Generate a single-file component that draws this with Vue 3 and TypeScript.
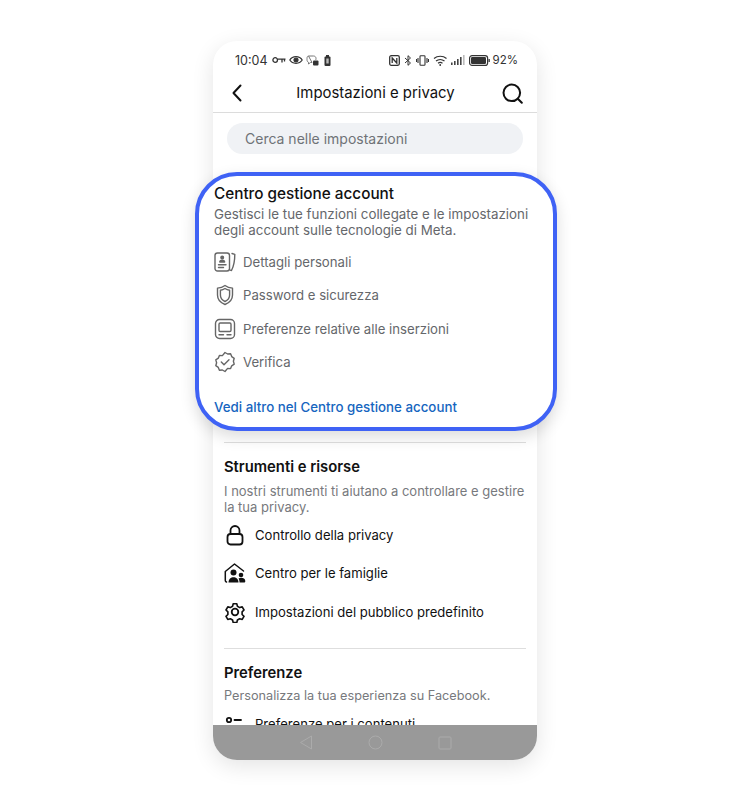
<script setup lang="ts">
const tools = [
  { id: 'lock', label: 'Controllo della privacy' },
  { id: 'family', label: 'Centro per le famiglie' },
  { id: 'gear', label: 'Impostazioni del pubblico predefinito' },
]
const accountLinks = [
  { id: 'card', label: 'Dettagli personali' },
  { id: 'shield', label: 'Password e sicurezza' },
  { id: 'ads', label: 'Preferenze relative alle inserzioni' },
  { id: 'badge', label: 'Verifica' },
]
</script>

<template>
  <div class="page">
    <div class="phone">
      <div class="status">
        <div class="status-left">
          <span class="time">10:04</span>
          <svg width="14" height="8" viewBox="0 0 14 8" fill="none" stroke="#333" stroke-width="1.3"><circle cx="3.2" cy="4" r="2.3" /><path d="M5.5 3.2H13.500M10 3.2V6.500M12.500 3.2V5.500" /></svg>
          <svg width="14" height="10" viewBox="0 0 14 10" fill="none" stroke="#333" stroke-width="1.2"><path d="M.8 5C3.5.6 10.500.6 13.200 5 10.500 9.400 3.5 9.400.8 5Z" /><circle cx="7" cy="5" r="2" fill="#333" /></svg>
          <svg width="13" height="11" viewBox="0 0 13 11" fill="none" stroke="#777" stroke-width="1"><path d="M2.500 1h5c1.500 0 2.500 1 2.500 2.500 0 .5 0 1-.3 1.500M6 7.500H4.500L2.500 9V7.300C1.500 7 1 6 1 4.500v-1C1 2 1.500 1 2.500 1Z" /><rect x="7" y="5.500" width="5.500" height="5" rx="1" fill="#333" stroke="none" /></svg>
          <svg class="left-batt" width="7" height="11" viewBox="0 0 7 11"><rect x="2" y="0" width="3" height="2" fill="#333" /><rect x=".5" y="1.500" width="6" height="9.500" rx="1" fill="#333" /><rect x="2.300" y="3.500" width="2.400" height="5" fill="#bbb" /></svg>
        </div>
        <div class="status-right">
          <svg width="11" height="11" viewBox="0 0 11 11" fill="none" stroke="#333" stroke-width="1.3"><rect x=".7" y=".7" width="9.600" height="9.600" rx="1.500" /><path d="M3.200 8V3L7.800 8V3" /></svg>
          <svg width="8" height="11" viewBox="0 0 8 11" fill="none" stroke="#333" stroke-width="1"><path d="M1 3l5.500 5L4 10.300V.7L6.500 3 1 8" /></svg>
          <svg width="13" height="11" viewBox="0 0 13 11" fill="none" stroke="#333" stroke-width="1.100"><rect x="4" y=".8" width="5" height="9.400" rx=".8" /><path d="M2 3v5M.5 4v3M11 3v5M12.500 4v3" /></svg>
          <svg width="15" height="11" viewBox="0 0 15 11" fill="none" stroke="#333" stroke-width="1.200"><path d="M1 3.500c3.500-3 9-3 12.500 0M3 6c2.400-2 6-2 8.500 0M5 8.300c1.300-1 3.200-1 4.500 0" /><circle cx="7.200" cy="10" r=".9" fill="#333" stroke="none" /></svg>
          <svg width="14" height="10" viewBox="0 0 14 10" fill="#444"><rect x="0" y="7.500" width="1.600" height="2.500" /><rect x="3" y="6" width="1.600" height="4" /><rect x="6" y="4" width="1.600" height="6" /><rect x="9" y="2" width="1.600" height="8" /><rect x="12" y="0" width="1.600" height="10" fill="#bbb" /></svg>
          <svg width="21" height="11" viewBox="0 0 21 11"><rect x=".6" y=".6" width="18" height="9.800" rx="2.500" fill="none" stroke="#333" stroke-width="1.200" /><rect x="2" y="2" width="15" height="7" rx="1.200" fill="#333" /><rect x="19.500" y="4" width="1.300" height="3" fill="#333" /></svg>
          <span class="percent">92%</span>
        </div>
      </div>

      <div class="nav-bar">
        <svg width="12" height="18" viewBox="0 0 12 18" fill="none" stroke="#111" stroke-width="2" stroke-linecap="round" stroke-linejoin="round"><path d="M9.500 1.500 2.500 9l7 7.500" /></svg>
        <span class="nav-title">Impostazioni e privacy</span>
        <svg width="21" height="21" viewBox="0 0 21 21" fill="none" stroke="#111" stroke-width="2" stroke-linecap="round"><circle cx="9.800" cy="9.800" r="8.300" /><path d="m15.800 15.800 4 4" /></svg>
      </div>

      <div class="scroll">
        <div class="search">Cerca nelle impostazioni</div>

        <section class="account-card">
          <h2>Centro gestione account</h2>
          <p class="desc">Gestisci le tue funzioni collegate e le impostazioni degli account sulle tecnologie di Meta.</p>
          <ul class="account-list">
            <li v-for="item in accountLinks" :key="item.id">
              <svg width="22" height="22" viewBox="0 0 22 22" fill="none" stroke="#666" stroke-width="1.400" stroke-linecap="round" stroke-linejoin="round">
                <template v-if="item.id === 'card'">
                  <rect x="1" y="2" width="14.500" height="18" rx="2.500" />
                  <circle cx="8.200" cy="6.500" r="1.300" fill="#666" />
                  <path d="M5.800 11c0-2.400 4.800-2.400 4.800 0Z" fill="#666" />
                  <path d="M4.500 13.800h7.500M4.500 16.500h5" />
                  <path d="M18 2.500l2.800.8c0 5.500-.8 11.500-3.300 16.200l-1.200-.4" />
                </template>
                <template v-else-if="item.id === 'shield'">
                  <path d="M11 1.500c2.300 1.700 4.700 2.400 7.500 2.600v7c0 4.500-3.200 7.800-7.500 9.400-4.300-1.600-7.500-4.900-7.500-9.400v-7C6.300 3.900 8.700 3.200 11 1.500Z" />
                  <path d="M11 4.500c1.500 1 3 1.500 4.600 1.700v4.900c0 3-2 5.300-4.600 6.400-2.600-1.100-4.600-3.400-4.600-6.400V6.200C8 6 9.500 5.500 11 4.500Z" />
                </template>
                <template v-else-if="item.id === 'ads'">
                  <rect x="1.500" y="1.500" width="19" height="19" rx="4" />
                  <rect x="5" y="5" width="12" height="8.500" rx="1.200" />
                  <path d="M5 16.700h4.500M13 16.700h4" />
                </template>
                <template v-else>
                  <path d="M11 1.500l2.600 1.500 3-.2 1.100 2.800 2.500 1.700-.8 2.900.8 2.900-2.500 1.700-1.100 2.800-3-.2L11 20.500 8.400 19l-3 .2-1.100-2.800-2.500-1.700.8-2.900-.8-2.900 2.500-1.700 1.100-2.800 3 .2Z" />
                  <path d="m7.300 11 2.700 2.700 5-5" />
                </template>
              </svg>
              <span>{{ item.label }}</span>
            </li>
          </ul>
          <a class="more">Vedi altro nel Centro gestione account</a>
        </section>

        <section class="group first">
          <h3>Strumenti e risorse</h3>
          <p class="desc light">I nostri strumenti ti aiutano a controllare e gestire la tua privacy.</p>
          <ul class="tool-list">
            <li v-for="tool in tools" :key="tool.id">
              <svg width="22" height="22" viewBox="0 0 22 22" fill="none" stroke="#111" stroke-width="1.800" stroke-linecap="round" stroke-linejoin="round">
                <template v-if="tool.id === 'lock'">
                  <rect x="3.500" y="10" width="15" height="10.500" rx="3" />
                  <path d="M6.500 10V6.500a4.500 4.500 0 0 1 9 0V10" />
                </template>
                <template v-else-if="tool.id === 'family'">
                  <path d="M2.500 20c-.8-.2-1.200-.7-1.200-1.500V9.500L10.500 2l9 7" stroke-width="1.500" />
                  <circle cx="9.500" cy="10.500" r="3" fill="#111" stroke="none" />
                  <path d="M4.500 20.500c0-7 10-7 10 0Z" fill="#111" stroke="none" />
                  <circle cx="17" cy="13" r="2.300" fill="#111" stroke="none" />
                  <path d="M15.500 20.500c0-1.500-.2-2.800-1-4 2.500-1.500 6.800-.5 6.800 2.500 0 1-.5 1.500-1.300 1.500Z" fill="#111" stroke="none" />
                </template>
                <template v-else>
                  <path d="M9 1.800h4l.7 2.900 2.500 1.400 2.800-.8 2 3.500-2.100 2.100v2.900l2.100 2-2 3.500-2.800-.8-2.500 1.400-.7 2.900H9l-.7-2.900-2.500-1.400-2.800.8-2-3.500 2.100-2v-2.900L1 8.800l2-3.500 2.800.8 2.500-1.400Z" transform="translate(1.100 1.100) scale(.9)" />
                  <circle cx="11" cy="11" r="3.300" />
                </template>
              </svg>
              <span>{{ tool.label }}</span>
            </li>
          </ul>
        </section>

        <section class="group">
          <h3>Preferenze</h3>
          <p class="desc light narrow">Personalizza la tua esperienza su Facebook.</p>
          <ul class="tool-list">
            <li>
              <svg width="22" height="22" viewBox="0 0 22 22" fill="none" stroke="#111" stroke-width="1.800" stroke-linecap="round"><circle cx="5" cy="7" r="2.200" /><path d="M10.500 7H17" /></svg>
              <span>Preferenze per i contenuti</span>
            </li>
          </ul>
        </section>
      </div>

      <div class="softkeys">
        <svg width="14" height="15" viewBox="0 0 14 15" fill="none" stroke="#ababab" stroke-width="1"><path d="M12.500 1 1.500 7.500l11 6.500Z" /></svg>
        <svg width="15" height="15" viewBox="0 0 15 15" fill="none" stroke="#ababab" stroke-width="1"><circle cx="7.500" cy="7.500" r="6.500" /></svg>
        <svg width="14" height="14" viewBox="0 0 14 14" fill="none" stroke="#ababab" stroke-width="1"><rect x="1" y="1" width="12" height="12" rx="1" /></svg>
      </div>
    </div>
  </div>
</template>

<style scoped>
.page {
  width: 750px;
  height: 800px;
  box-sizing: border-box;
  padding: 41px 213px 40px;
  background: #fff;
  font-family: "Inter", "Liberation Sans", sans-serif;
  color: #111;
}

.phone {
  height: 719px;
  border-radius: 24px;
  background: #fff;
  box-shadow: 0 6px 22px rgba(0, 0, 0, 0.11);
  display: flex;
  flex-direction: column;
}

.status {
  height: 36px;
  flex: none;
  padding: 2px 19px 0 22px;
  box-sizing: border-box;
  display: flex;
  align-items: center;
  justify-content: space-between;
}

.status-left,
.status-right {
  display: flex;
  align-items: center;
  gap: 3px;
}

.status-right {
  gap: 3.700px;
}

.left-batt {
  margin-left: 2px;
}

.time {
  font-size: 12.500px;
  color: #333;
  margin-right: 1px;
}

.percent {
  font-size: 11.500px;
  color: #333;
  margin-left: -1px;
}

.nav-bar {
  height: 36px;
  flex: none;
  padding: 0 14px 3px 18px;
  box-sizing: border-box;
  border-bottom: 1px solid #dcdcdc;
  display: flex;
  align-items: center;
  justify-content: space-between;
}

.nav-title {
  margin-left: 6px;
  font-size: 14.900px;
  color: #111;
}

/* only the bottom is clipped, the card sticks out at the sides */
.scroll {
  flex: 1;
  min-height: 0;
  clip-path: inset(0 -40px 0 -40px);
  display: flex;
  flex-direction: column;
}

.search {
  flex: none;
  height: 31px;
  margin: 10px 14px 0;
  padding-left: 18px;
  border-radius: 16px;
  background: #f0f2f5;
  color: #6f7277;
  font-size: 14px;
  line-height: 31px;
}

.account-card {
  flex: none;
  position: relative;
  z-index: 1;
  height: 259px;
  box-sizing: border-box;
  margin: 18px -20px 0 -18px;
  padding: 8px 15px 0;
  border: 4px solid #3f62f5;
  border-radius: 42px;
  background: #fff;
  box-shadow: 0 6px 16px rgba(0, 0, 0, 0.14);
  display: flex;
  flex-direction: column;
}

h2,
h3 {
  margin: 0;
  line-height: 20px;
}

h2 {
  font-size: 15.300px;
  font-weight: 500;
  color: #111;
}

h3 {
  font-size: 14.800px;
  font-weight: 600;
}

.desc {
  margin: 2px 0 0;
  font-size: 13.350px;
  line-height: 16px;
  color: #65676b;
}

.desc.light {
  font-size: 13px;
  line-height: 16.500px;
  color: #77797d;
}

.desc.narrow {
  margin-top: 3.500px;
  font-size: 12.700px;
}

ul {
  list-style: none;
  margin: 0;
  padding: 0;
}

.account-list {
  margin-top: 7px;
  display: flex;
  flex-direction: column;
}

.account-list li {
  height: 33.500px;
  display: flex;
  align-items: center;
  gap: 7px;
  font-size: 13.200px;
  color: #65676b;
}

.more {
  margin-top: auto;
  margin-bottom: 11px;
  font-size: 13.300px;
  font-weight: 500;
  line-height: 18px;
  color: #1565c0;
}

.group {
  flex: none;
  margin: 11px 11px 0;
  padding-top: 14px;
  border-top: 1px solid #dedede;
}

.group h3 {
  margin-bottom: 5.500px;
}

.group.first {
  padding-bottom: 5.500px;
}

.tool-list li {
  height: 38.500px;
  display: flex;
  align-items: center;
  gap: 9px;
  font-size: 13.100px;
  color: #111;
}

.softkeys {
  flex: none;
  position: relative;
  z-index: 2;
  height: 35px;
  border-radius: 0 0 24px 24px;
  background: #999;
  display: flex;
  align-items: center;
  justify-content: center;
  gap: 55px;
}
</style>

<style>
html,
body {
  background: #fff;
}
</style>
